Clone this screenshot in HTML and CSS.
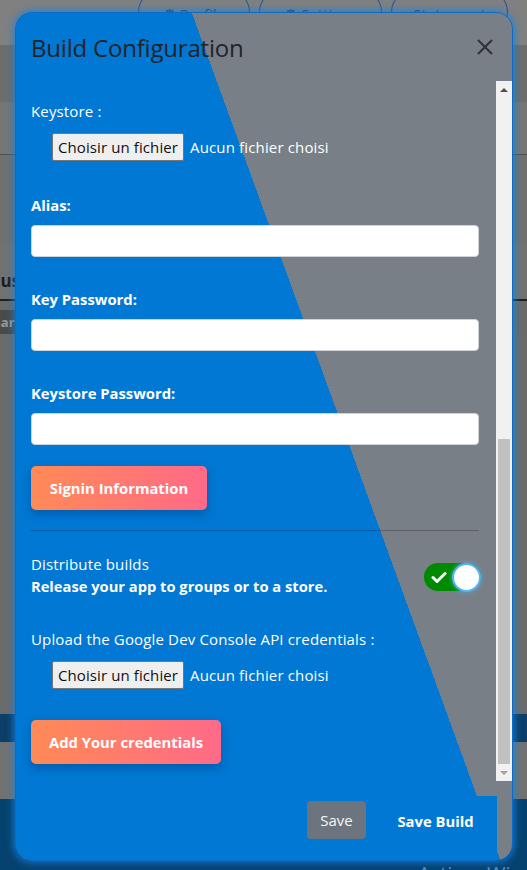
FILE: index.html
```html
<!DOCTYPE html>
<html lang="fr">
<head>
<meta charset="utf-8">
<title>Build Configuration</title>
<link rel="stylesheet" href="styles.css">
</head>
<body>
<div class="page">
  <div class="band band-top">
    <div class="pills">
      <span class="pill pill-1">⚙ Profile</span>
      <span class="pill pill-2">⚙ Settings</span>
      <span class="pill pill-3">Statement</span>
    </div>
  </div>
  <div class="band band-2"></div>
  <div class="band band-3"></div>
  <div class="band band-4"></div>
  <div class="band band-tabs"><span class="tab-text">Status</span></div>
  <div class="band band-chip"><span class="chip-text">Charte</span></div>
  <div class="band band-5"></div>
  <div class="band band-blue1"></div>
  <div class="band band-6"></div>
  <div class="band band-blue2"></div>
</div>

<div class="watermark">Activer Windows</div>

<div class="modal">
  <div class="modal-header">
    <h2 class="modal-title">Build Configuration</h2>
    <span class="close" aria-label="Close">
      <svg width="16" height="16" viewBox="0 0 16 16"><path d="M1 1 L15 15 M15 1 L1 15" stroke="#2f3237" stroke-width="2" fill="none"/></svg>
    </span>
  </div>
  <div class="modal-body">
    <div class="body-content">
      <div class="label plain first">Keystore :</div>
      <div class="file-row">
        <span class="file-btn">Choisir un fichier</span>
        <span class="file-name">Aucun fichier choisi</span>
      </div>

      <div class="label bold gap-big">Alias:</div>
      <div class="input"></div>

      <div class="label bold gap-mid">Key Password:</div>
      <div class="input"></div>

      <div class="label bold gap-mid">Keystore Password:</div>
      <div class="input"></div>

      <div class="grad-btn btn-signin">Signin Information</div>

      <div class="divider"></div>

      <div class="distribute">
        <div class="dist-text">
          <div class="plain-line">Distribute builds</div>
          <div class="bold-line">Release your app to groups or to a store.</div>
        </div>
        <div class="toggle">
          <svg class="check" width="16" height="13" viewBox="0 0 16 13"><path d="M2 6.5 L6 10.5 L14 2.5" stroke="#fff" stroke-width="3" fill="none" stroke-linecap="round" stroke-linejoin="round"/></svg>
          <span class="knob"></span>
        </div>
      </div>

      <div class="label plain gap-upload">Upload the Google Dev Console API credentials :</div>
      <div class="file-row">
        <span class="file-btn">Choisir un fichier</span>
        <span class="file-name">Aucun fichier choisi</span>
      </div>

      <div class="grad-btn btn-cred">Add Your credentials</div>
    </div>
    <div class="scrollbar">
      <div class="sb-btn"><span class="arrow-up"></span></div>
      <div class="sb-track"><div class="sb-thumb"></div></div>
      <div class="sb-btn"><span class="arrow-down"></span></div>
    </div>
  </div>
  <div class="modal-footer">
    <span class="btn-save">Save</span>
    <span class="btn-build">Save Build</span>
  </div>
</div>
</body>
</html>
```
FILE: styles.css
```css
* { box-sizing: border-box; }
html, body { margin: 0; padding: 0; }
body {
  width: 527px;
  height: 870px;
  overflow: hidden;
  font-family: "Open Sans", "Noto Sans", "Liberation Sans", sans-serif;
  background: #6c6c6c;
  position: relative;
}

/* ---------- background page (dimmed) ---------- */
.page { display: flex; flex-direction: column; }
.band { width: 100%; }
.band-top { height: 45px; background: #808080; overflow: hidden; }
.pills { display: flex; gap: 9px; padding-left: 138px; margin-top: -10px; }
.pill {
  height: 44px;
  border: 1px solid #1d4f91;
  border-radius: 22px;
  color: #1d3a66;
  font-size: 15px;
  display: flex;
  align-items: center;
  justify-content: center;
  padding-top: 4px;
}
.pill-1 { width: 112px; }
.pill-2 { width: 123px; }
.pill-3 { width: 117px; }
.band-2 { height: 57px; background: #6d6d6d; }
.band-3 { height: 53px; background: #767676; border-bottom: 1px solid #505050; }
.band-4 { height: 88px; background: #707070; }
.band-tabs {
  height: 58px; background: #727272; border-bottom: 2px solid #1f1f1f;
  display: flex; align-items: flex-end; padding-bottom: 7px;
}
.tab-text { font-weight: 700; font-size: 17px; line-height: 23px; color: #1b1b1b; margin-left: -34px; }
.band-chip { height: 33px; background: #6a6a6a; display: flex; align-items: flex-start; padding-top: 9px; }
.chip-text {
  background: #4a4a4a; color: #9a9a9a; font-size: 13px; font-weight: 700;
  margin-left: -22px; padding: 1px 6px; line-height: 22px;
}
.band-5 { height: 380px; background: #6b6b6b; }
.band-blue1 { height: 28px; background: #0b3e68; }
.band-6 { height: 57px; background: #727272; }
.band-blue2 { height: 80px; background: #06426f; }

.watermark {
  position: absolute;
  left: 418px;
  top: 860px;
  font-family: "Open Sans", sans-serif;
  font-size: 20px;
  color: rgba(190, 200, 210, 0.55);
  white-space: nowrap;
}

/* ---------- modal ---------- */
.modal {
  position: absolute;
  left: 15px;
  top: 12px;
  width: 498px;
  height: 849px;
  border: 1px solid #0a6cc8;
  border-radius: 17px;
  overflow: hidden;
  background: linear-gradient(70deg, #0078d4 455px, #797f87 455px);
  box-shadow: 0 0 7px 2px rgba(20, 130, 225, 0.75);
  display: flex;
  flex-direction: column;
}

.modal-header {
  height: 68px;
  display: flex;
  align-items: flex-start;
  justify-content: space-between;
  padding: 20px 19px 0 15px;
  flex-shrink: 0;
}
.modal-title {
  margin: 0;
  font-size: 24px;
  font-weight: 500;
  color: #212428;
  line-height: 30px;
  letter-spacing: -0.2px;
}
.close { margin-top: 6px; display: flex; }

.modal-body {
  height: 700px;
  display: flex;
  flex-shrink: 0;
}
.body-content {
  flex: 1;
  padding: 0 17px 0 15px;
  color: #fff;
  font-size: 15px;
  letter-spacing: 0.15px;
}
.label { line-height: 22px; }
.plain { font-weight: 400; }
.bold { font-weight: 700; font-size: 14.8px; letter-spacing: 0; }
.first { margin-top: 19px; }
.gap-big { margin-top: 33px; }
.gap-mid { margin-top: 31px; }
.gap-upload { margin-top: 31px; }

.file-row {
  display: flex;
  align-items: center;
  margin-top: 11px;
  padding-left: 21px;
  height: 28px;
}
.file-btn {
  height: 28px;
  width: 132px;
  background: #efefef;
  border: 1px solid #767676;
  border-radius: 2px;
  color: #111;
  font-size: 15px;
  letter-spacing: 0.1px;
  display: flex;
  align-items: center;
  justify-content: center;
}
.file-name { margin-left: 6px; color: #fff; }

.input {
  margin-top: 9px;
  height: 32px;
  width: 448px;
  background: #fff;
  border: 1px solid #ced4da;
  border-radius: 4px;
}

.grad-btn {
  height: 44px;
  border-radius: 5px;
  background: linear-gradient(90deg, #ff8a56, #ff6a88);
  color: #fff;
  font-weight: 700;
  font-size: 14.8px;
  letter-spacing: 0;
  display: flex;
  align-items: center;
  justify-content: center;
  box-shadow: 0 4px 10px rgba(0, 40, 90, 0.35);
}
.btn-signin { width: 176px; margin-top: 21px; }
.btn-cred { width: 190px; margin-top: 31px; }

.divider {
  margin-top: 20px;
  height: 1px;
  width: 448px;
  background: rgba(0, 0, 0, 0.22);
}

.distribute {
  display: flex;
  justify-content: space-between;
  align-items: flex-start;
  margin-top: 22px;
}
.plain-line, .bold-line { line-height: 22px; }
.bold-line { font-weight: 700; font-size: 14.7px; letter-spacing: 0; }
.toggle {
  margin-top: 10px;
  margin-right: -2px;
  width: 57px;
  height: 28px;
  border-radius: 14px;
  background: #008a00;
  display: flex;
  align-items: center;
  justify-content: space-between;
  padding: 0 2px 0 7px;
}
.knob {
  width: 25px;
  height: 25px;
  border-radius: 50%;
  background: #fff;
  box-shadow: 0 0 0 2px #54b4f5, 0 0 5px 2px rgba(84, 180, 245, 0.7);
}

/* fake classic scrollbar */
.scrollbar {
  width: 16px;
  background: #f1f1f1;
  display: flex;
  flex-direction: column;
}
.sb-btn {
  height: 17px;
  display: flex;
  align-items: center;
  justify-content: center;
}
.arrow-up {
  width: 0; height: 0;
  border-left: 4px solid transparent;
  border-right: 4px solid transparent;
  border-bottom: 4px solid #505050;
}
.arrow-down {
  width: 0; height: 0;
  border-left: 4px solid transparent;
  border-right: 4px solid transparent;
  border-top: 4px solid #a3a3a3;
}
.sb-track {
  flex: 1;
  display: flex;
  flex-direction: column;
  justify-content: flex-end;
  padding: 0 2px;
}
.sb-thumb { height: 325px; background: #c1c1c1; }

.modal-footer {
  flex: 1;
  display: flex;
  justify-content: flex-end;
  align-items: flex-start;
  padding: 15px 15px 0 0;
  gap: 8px;
}
.btn-save {
  margin-top: 5px;
  height: 38px;
  width: 59px;
  border-radius: 4px;
  background: #6c757d;
  color: #f5f5f5;
  font-size: 15px;
  display: flex;
  align-items: center;
  justify-content: center;
}
.btn-build {
  height: 66px;
  width: 123px;
  background: #0078d4;
  color: #fff;
  font-weight: 700;
  font-size: 14.8px;
  display: flex;
  justify-content: center;
  padding-top: 14px;
  line-height: 22px;
}
```
